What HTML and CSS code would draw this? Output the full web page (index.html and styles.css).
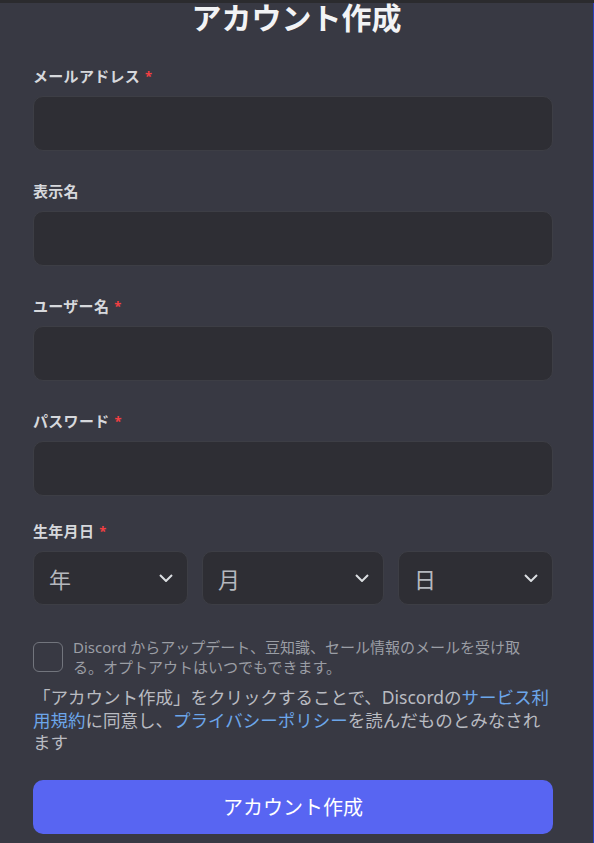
FILE: index.html
```html
<!DOCTYPE html>
<html lang="ja">
<head>
    <meta charset="UTF-8">
    <meta name="viewport" content="width=device-width, initial-scale=1.0">
    <title>アカウント作成</title>
    <link rel="stylesheet" href="styles.css">
</head>
<body>
    <div class="topbar"></div>
    <div class="window">
        <h1 class="title">アカウント作成</h1>
        <form class="form">
            <div class="field">
                <label class="label">メールアドレス<span class="required">*</span></label>
                <div class="input"></div>
            </div>
            <div class="field">
                <label class="label">表示名</label>
                <div class="input"></div>
            </div>
            <div class="field">
                <label class="label">ユーザー名<span class="required">*</span></label>
                <div class="input"></div>
            </div>
            <div class="field">
                <label class="label">パスワード<span class="required">*</span></label>
                <div class="input"></div>
            </div>
            <div class="field field-date">
                <label class="label">生年月日<span class="required">*</span></label>
                <div class="date-row">
                    <div class="select">
                        <span class="select-value">年</span>
                        <svg class="chevron" width="14" height="8" viewBox="0 0 14 8"><path d="M1 1l6 6 6-6" fill="none" stroke="currentColor" stroke-width="2"/></svg>
                    </div>
                    <div class="select">
                        <span class="select-value">月</span>
                        <svg class="chevron" width="14" height="8" viewBox="0 0 14 8"><path d="M1 1l6 6 6-6" fill="none" stroke="currentColor" stroke-width="2"/></svg>
                    </div>
                    <div class="select">
                        <span class="select-value">日</span>
                        <svg class="chevron" width="14" height="8" viewBox="0 0 14 8"><path d="M1 1l6 6 6-6" fill="none" stroke="currentColor" stroke-width="2"/></svg>
                    </div>
                </div>
            </div>

            <div class="checkbox-row">
                <div class="checkbox"></div>
                <p class="checkbox-text">Discord からアップデート、豆知識、セール情報のメールを受け取る。オプトアウトはいつでもできます。</p>
            </div>

            <p class="terms">「アカウント作成」をクリックすることで、Discordの<a href="#">サービス利用規約</a>に同意し、<a href="#">プライバシーポリシー</a>を読んだものとみなされます</p>

            <button type="button" class="submit">アカウント作成</button>
        </form>
    </div>
</body>
</html>
```

FILE: styles.css
```css
body {
    margin: 0;
    background-color: #383943;
    font-family: "Noto Sans", "Noto Sans CJK JP", sans-serif;
    color: #dbdee1;
}
.topbar {
    height: 3px;
    background: #2b2b2e;
}
.window {
    min-height: 840px;
    border-right: 1px solid #2c3ebd;
}
.title {
    margin: 0;
    font-size: 30px;
    line-height: 30px;
    font-weight: bold;
    color: #f2f3f5;
    text-align: center;
}
.form {
    padding: 33px 40px 0 33px;
}
.field + .field {
    margin-top: 30px;
}
.field.field-date {
    margin-top: 25px;
}
.label {
    display: block;
    margin-bottom: 10px;
    font-size: 15px;
    line-height: 20px;
    font-weight: bold;
    letter-spacing: 0.02em;
    color: #d6d8dc;
}
.required {
    padding-left: 5px;
    color: #f23f42;
    font-size: 13px;
    vertical-align: top;
}
.input {
    height: 55px;
    box-sizing: border-box;
    background: #2e2e34;
    border: 1px solid #3d3e45;
    border-radius: 10px;
}
.date-row {
    display: grid;
    grid-template-columns: 155fr 182fr 155fr;
    gap: 14px;
}
.select {
    display: flex;
    align-items: center;
    justify-content: space-between;
    height: 54px;
    box-sizing: border-box;
    padding: 0 14px 0 15px;
    background: #2e2e34;
    border: 1px solid #3d3e45;
    border-radius: 10px;
}
.select-value {
    font-size: 22px;
    color: #b5b8be;
}
.chevron {
    color: #dbdee1;
}
.checkbox-row {
    display: flex;
    align-items: center;
    gap: 10px;
    margin-top: 32px;
}
.checkbox {
    flex: none;
    width: 30px;
    height: 30px;
    box-sizing: border-box;
    border: 1px solid #72757d;
    border-radius: 6px;
}
.checkbox-text {
    margin: 0;
    max-width: 455px;
    font-size: 15px;
    line-height: 20px;
    color: #9b9ea5;
}
.terms {
    margin: 9px 0 0;
    font-size: 17.5px;
    line-height: 22.5px;
    color: #b9bbc1;
}
.terms a {
    color: #6ca6ea;
    text-decoration: none;
}
.submit {
    display: block;
    width: 100%;
    height: 54px;
    margin-top: 26px;
    border: none;
    border-radius: 10px;
    background: #5865f2;
    color: #ffffff;
    font-family: inherit;
    font-size: 20px;
}
```
